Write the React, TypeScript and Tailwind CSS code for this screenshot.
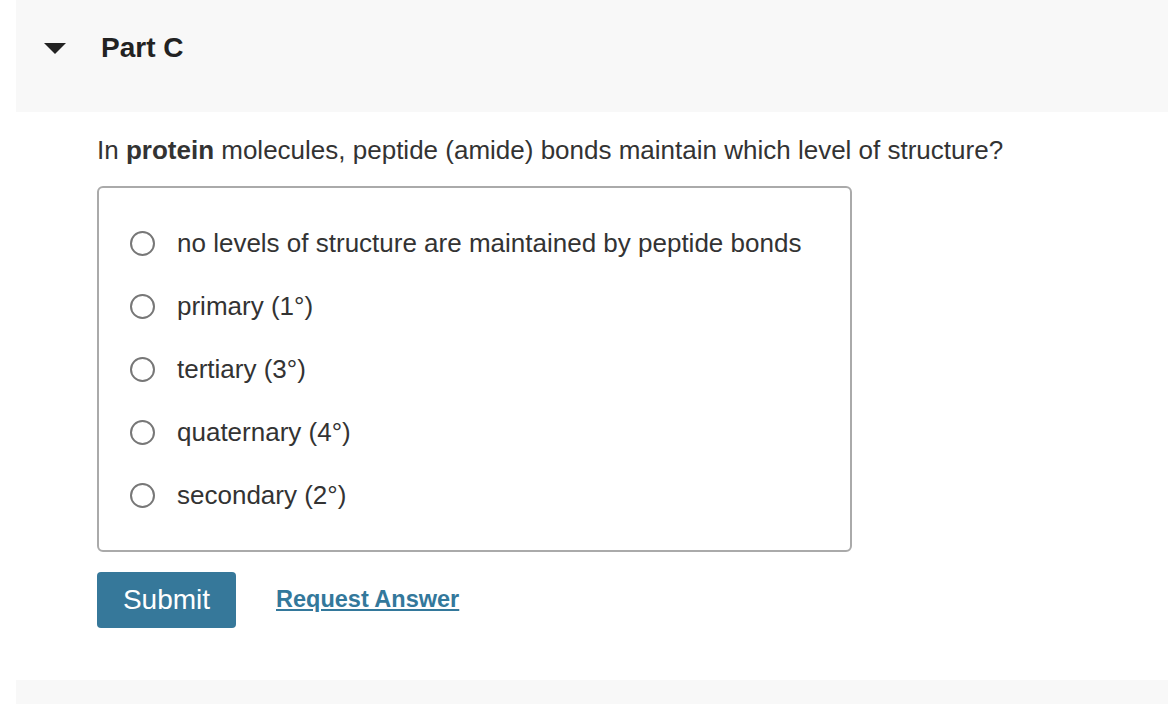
const options = [
  "no levels of structure are maintained by peptide bonds",
  "primary (1°)",
  "tertiary (3°)",
  "quaternary (4°)",
  "secondary (2°)",
];

export default function App() {
  return (
    <div className="w-[1168px] h-[704px] bg-white overflow-hidden font-['Liberation_Sans',Arial,sans-serif] text-[#333]">
      <div className="ml-4 h-[112px] bg-[#f8f8f8] flex items-center">
        <svg width="22" height="11" viewBox="0 0 22 11" className="ml-[28px] mt-[-16px]">
          <polygon points="0,0 22,0 11,11" fill="#222" />
        </svg>
        <h2 className="ml-[35px] mt-[-17px] text-[28px] font-bold text-[#222]">Part C</h2>
      </div>

      <div className="pl-[97px] pt-[23px]">
        <p className="text-[26px] leading-[30px]">
          In <b>protein</b> molecules, peptide (amide) bonds maintain which level of structure?
        </p>

        <div className="mt-[21px] w-[755px] h-[366px] border-2 border-[#aaa] rounded-[6px] pt-[24px] pl-[31px]">
          {options.map((o) => (
            <label key={o} className="flex items-center h-[63px]">
              <span className="w-[25px] h-[25px] rounded-full border-2 border-[#777] bg-white shrink-0" />
              <span className="ml-[22px] text-[26px]">{o}</span>
            </label>
          ))}
        </div>

        <div className="mt-[20px] flex items-center">
          <button className="w-[139px] h-[56px] rounded-[4px] bg-[#36789a] text-white text-[28px]">Submit</button>
          <a className="ml-[40px] text-[23.5px] font-bold text-[#33789b] underline">Request Answer</a>
        </div>
      </div>

      <div className="ml-4 mt-[52px] h-[40px] bg-[#f8f8f8]" />
    </div>
  );
}
